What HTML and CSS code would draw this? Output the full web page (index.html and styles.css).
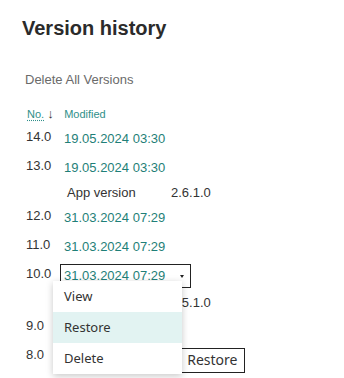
FILE: index.html
```html
<!DOCTYPE html>
<html>
<head>
<meta charset="utf-8">
<link rel="stylesheet" href="styles.css">
</head>
<body>
<h1 class="title">Version history</h1>
<div class="delete-all">Delete All Versions</div>
<div class="head">
  <span class="head-no">No.</span><span class="arrow">&#8595;</span>
  <span class="head-mod">Modified</span>
</div>
<div class="list">
  <div class="item">
    <div class="row"><span class="num">14.0</span><span class="date">19.05.2024 03:30</span></div>
  </div>
  <div class="item">
    <div class="row"><span class="num">13.0</span><span class="date">19.05.2024 03:30</span></div>
    <div class="details"><span class="label">App version</span><span class="value">2.6.1.0</span></div>
  </div>
  <div class="item">
    <div class="row"><span class="num">12.0</span><span class="date">31.03.2024 07:29</span></div>
  </div>
  <div class="item">
    <div class="row"><span class="num">11.0</span><span class="date">31.03.2024 07:29</span></div>
  </div>
  <div class="item">
    <div class="row"><span class="num">10.0</span>
      <span class="date active">31.03.2024 07:29<span class="caret"></span>
        <div class="menu">
          <div class="menu-item">View</div>
          <div class="menu-item hover">Restore</div>
          <div class="menu-item">Delete</div>
        </div>
      </span>
    </div>
    <div class="details details-active"><span class="label">App version</span><span class="value">2.5.1.0</span></div>
  </div>
  <div class="item">
    <div class="row"><span class="num">9.0</span><span class="date">31.03.2024 07:29</span></div>
  </div>
  <div class="item">
    <div class="row"><span class="num">8.0</span><span class="date">31.03.2024 07:29</span><span class="restore-btn">Restore</span></div>
  </div>
</div>
</body>
</html>
```
FILE: styles.css
```css
html, body {
  margin: 0;
  padding: 0;
  background: #fff;
  overflow: hidden;
}
body {
  font-family: "Liberation Sans", Arial, sans-serif;
  color: #333;
  width: 344px;
  height: 378px;
}
.title {
  margin: 0;
  padding: 17px 0 0 22px;
  font-size: 20px;
  line-height: 23px;
  font-weight: bold;
  color: #2b2b2b;
}
.delete-all {
  margin: 32px 0 0 25px;
  font-size: 13px;
  line-height: 15px;
  color: #6a6a6a;
}
.head {
  display: flex;
  align-items: baseline;
  margin: 20px 0 0 27px;
  font-size: 11px;
  line-height: 13px;
  color: #2f8f8a;
}
.head-no {
  text-decoration: underline dotted #2f8f8a;
  text-underline-offset: 2px;
}
.arrow {
  color: #333;
  font-size: 13px;
  margin-left: 3px;
  width: 17px;
}
.list {
  display: flex;
  flex-direction: column;
  gap: 5px;
  margin-top: 6px;
  padding-left: 26px;
}
.row {
  display: flex;
  align-items: flex-start;
  height: 24px;
}
.num {
  width: 34px;
  padding-top: 2px;
  font-size: 13px;
  line-height: 15px;
  color: #333;
}
.date {
  position: relative;
  display: inline-flex;
  align-items: flex-start;
  box-sizing: border-box;
  height: 24px;
  border: 1px solid transparent;
  padding: 3px 3px 0 3px;
  font-size: 13px;
  line-height: 15px;
  color: #1f7f78;
}
.date.active {
  width: 131px;
  border-color: #222;
}
.caret {
  margin: 7px 0 0 15px;
  width: 0;
  height: 0;
  border-left: 2.5px solid transparent;
  border-right: 2.5px solid transparent;
  border-top: 3px solid #222;
}
.menu {
  position: absolute;
  left: -8px;
  top: 16px;
  width: 129px;
  background: #fff;
  box-shadow: 0 2px 7px rgba(0, 0, 0, 0.22);
  font-family: "Noto Sans", "Open Sans", sans-serif;
  font-size: 13px;
  color: #333;
  z-index: 2;
}
.menu-item {
  height: 31px;
  line-height: 31px;
  padding-left: 11px;
}
.menu-item.hover {
  background: #e2f3f2;
}
.details {
  display: flex;
  padding: 5px 0 1px 41px;
  font-size: 13px;
  line-height: 15px;
  color: #333;
}
.details-active {
  padding-top: 7px;
  padding-bottom: 1px;
}
.label {
  width: 104px;
}
.restore-btn {
  margin: 3px 0 0 10px;
  box-sizing: border-box;
  height: 25px;
  padding: 0 7px 2px;
  border: 1px solid #222;
  font-family: "Noto Sans", "Open Sans", sans-serif;
  font-size: 14px;
  line-height: 21px;
  color: #333;
}
```
